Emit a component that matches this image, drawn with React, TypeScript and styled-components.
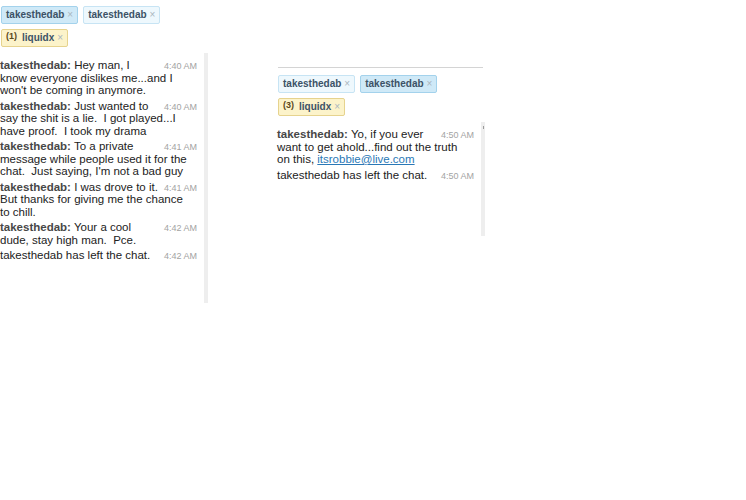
import React from "react";
import styled, { createGlobalStyle } from "styled-components";

const Global = createGlobalStyle`
  html, body { margin: 0; padding: 0; background: #ffffff; }
  body { font-family: "Liberation Sans", Arial, Helvetica, sans-serif; }
`;

const Page = styled.div`
  display: flex;
  align-items: flex-start;
  gap: 68px;
`;

const Panel = styled.section<{ $ruled?: boolean }>`
  width: 209px;
  display: flex;
  flex-direction: column;
  margin-top: ${(p) => (p.$ruled ? "67px" : "0")};
`;

const TabBar = styled.div<{ $ruled?: boolean }>`
  display: flex;
  flex-wrap: wrap;
  gap: 5px;
  margin: 0 3px 0 1px;
  padding-top: ${(p) => (p.$ruled ? "7px" : "6px")};
  border-top: ${(p) => (p.$ruled ? "1px solid #d4d4d4" : "1px solid transparent")};
  margin-top: ${(p) => (p.$ruled ? "0" : "-1px")};
`;

type TabTone = "active" | "idle" | "alert";

const toneColors: Record<TabTone, { bg: string; border: string }> = {
  active: { bg: "#cfe9f7", border: "#a3d2ec" },
  idle: { bg: "#eef8fd", border: "#c7e4f4" },
  alert: { bg: "#fcf3ca", border: "#e6d38e" },
};

const Tab = styled.div<{ $tone: TabTone }>`
  display: inline-flex;
  align-items: center;
  height: 16px;
  padding: 0 4px;
  border: 1px solid ${(p) => toneColors[p.$tone].border};
  border-radius: 2px;
  background: ${(p) => toneColors[p.$tone].bg};
  font-size: 10px;
  font-weight: bold;
  line-height: 16px;
  color: #3c5266;
  white-space: nowrap;
`;

const Unread = styled.sup`
  font-size: 9px;
  font-weight: bold;
  color: #5b4a1c;
  margin-right: 5px;
  position: relative;
  top: -2px;
  line-height: 0;
`;

const Close = styled.span`
  margin-left: 3px;
  font-size: 10px;
  font-weight: normal;
  color: #aab6be;
`;

const ChatBox = styled.div<{ $height: number }>`
  display: flex;
  height: ${(p) => p.$height}px;
  margin-top: 6px;
`;

const Messages = styled.div`
  width: 197px;
  padding-top: 6px;
`;

const ScrollTrack = styled.div<{ $marked?: boolean }>`
  position: relative;
  width: 4px;
  margin-left: 7px;
  background: #eeeeee;
  &::before {
    content: "";
    display: ${(p) => (p.$marked ? "block" : "none")};
    position: absolute;
    top: 4px;
    left: 2px;
    width: 1px;
    height: 3px;
    background: #9a9a9a;
  }
`;

const Message = styled.div`
  display: flow-root;
  margin-bottom: 3px;
  padding-right: 6px;
  font-size: 11.5px;
  line-height: 12.5px;
  color: #222222;
  white-space: pre-wrap;
`;

const Time = styled.span`
  float: right;
  position: relative;
  top: 1px;
  margin-left: 5px;
  margin-right: -6px;
  font-size: 9px;
  color: #a3a3a3;
  white-space: nowrap;
`;

const Author = styled.b`
  color: #474747;
`;

const Link = styled.a`
  color: #2a78b6;
  text-decoration: underline;
`;

type Line = { time: string; author?: string; text: React.ReactNode };

const leftLog: Line[] = [
  { time: "4:40 AM", author: "takesthedab", text: "Hey man, I know everyone dislikes me...and I won't be coming in anymore." },
  { time: "4:40 AM", author: "takesthedab", text: "Just wanted to say the shit is a lie.  I got played...I have proof.  I took my drama" },
  { time: "4:41 AM", author: "takesthedab", text: "To a private message while people used it for the chat.  Just saying, I'm not a bad guy" },
  { time: "4:41 AM", author: "takesthedab", text: "I was drove to it.  But thanks for giving me the chance to chill." },
  { time: "4:42 AM", author: "takesthedab", text: "Your a cool dude, stay high man.  Pce." },
  { time: "4:42 AM", text: "takesthedab has left the chat." },
];

const rightLog: Line[] = [
  {
    time: "4:50 AM",
    author: "takesthedab",
    text: (
      <>
        Yo, if you ever want to get ahold...find out the truth on this,{" "}
        <Link href="#">itsrobbie@live.com</Link>
      </>
    ),
  },
  { time: "4:50 AM", text: "takesthedab has left the chat." },
];

function Log({ lines }: { lines: Line[] }) {
  return (
    <Messages>
      {lines.map((l, i) => (
        <Message key={i}>
          <Time>{l.time}</Time>
          {l.author && <Author>{l.author}:</Author>}
          {l.author ? " " : ""}
          {l.text}
        </Message>
      ))}
    </Messages>
  );
}

function Tabs({ ruled, activeFirst, unread }: { ruled?: boolean; activeFirst: boolean; unread: number }) {
  return (
    <TabBar $ruled={ruled}>
      <Tab $tone={activeFirst ? "active" : "idle"}>
        takesthedab<Close>×</Close>
      </Tab>
      <Tab $tone={activeFirst ? "idle" : "active"}>
        takesthedab<Close>×</Close>
      </Tab>
      <Tab $tone="alert">
        <Unread>({unread})</Unread>liquidx<Close>×</Close>
      </Tab>
    </TabBar>
  );
}

export default function App() {
  return (
    <>
      <Global />
      <Page>
        <Panel>
          <Tabs activeFirst unread={1} />
          <ChatBox $height={250}>
            <Log lines={leftLog} />
            <ScrollTrack />
          </ChatBox>
        </Panel>
        <Panel $ruled>
          <Tabs ruled activeFirst={false} unread={3} />
          <ChatBox $height={114}>
            <Log lines={rightLog} />
            <ScrollTrack $marked />
          </ChatBox>
        </Panel>
      </Page>
    </>
  );
}
